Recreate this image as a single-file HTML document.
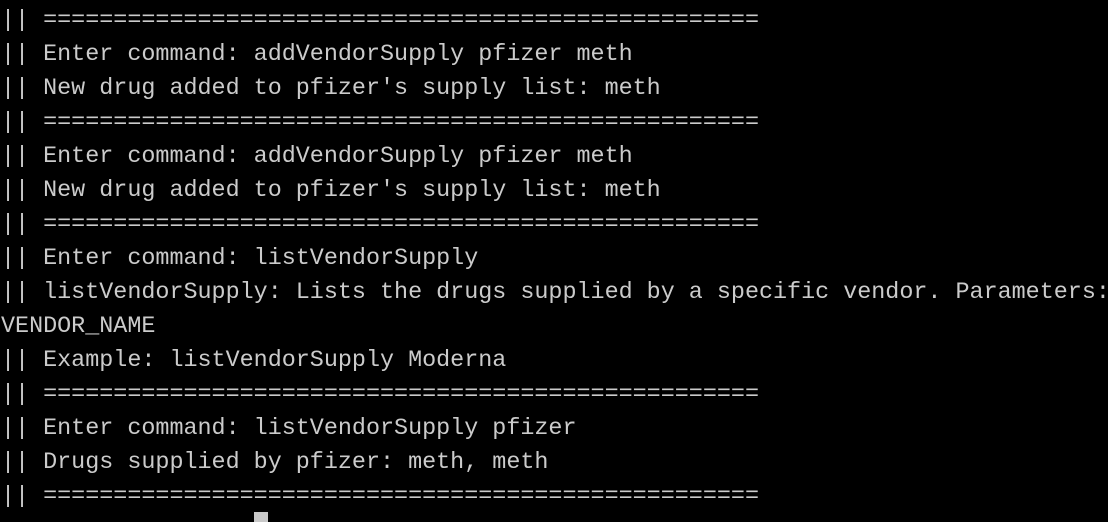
<!DOCTYPE html>
<html><head><style>
html,body{margin:0;background:#000;width:1108px;height:518px;overflow:hidden}
pre{margin:0;position:absolute;left:1px;top:4px;font-family:"Liberation Mono",monospace;font-size:23.4px;line-height:34px;color:#cbcbcb;white-space:pre}
.cur{position:absolute;left:254px;top:512px;width:14px;height:10px;background:#c8c8c8}
</style></head><body>
<pre>|| ===================================================
|| Enter command: addVendorSupply pfizer meth
|| New drug added to pfizer's supply list: meth
|| ===================================================
|| Enter command: addVendorSupply pfizer meth
|| New drug added to pfizer's supply list: meth
|| ===================================================
|| Enter command: listVendorSupply
|| listVendorSupply: Lists the drugs supplied by a specific vendor. Parameters:
VENDOR_NAME
|| Example: listVendorSupply Moderna
|| ===================================================
|| Enter command: listVendorSupply pfizer
|| Drugs supplied by pfizer: meth, meth
|| ===================================================</pre>
<div class="cur"></div>
</body></html>
